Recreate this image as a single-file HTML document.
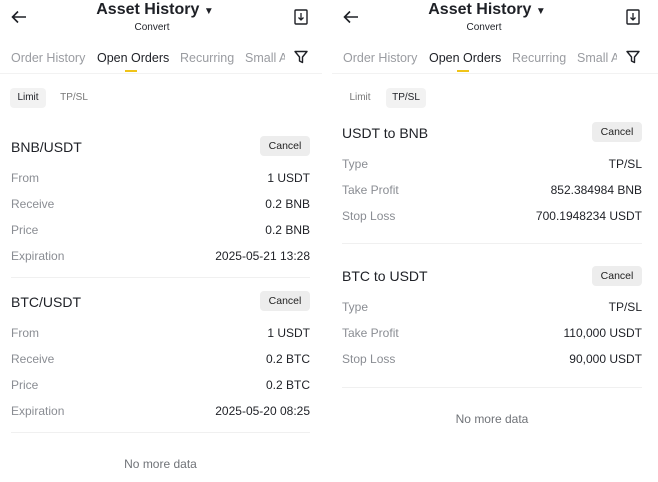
<!DOCTYPE html>
<html><head><style>
*{margin:0;padding:0;box-sizing:border-box}
body{width:658px;height:482px;background:#fff;position:relative;overflow:hidden;font-family:"Liberation Sans",sans-serif;color:#1e2026}
.a{position:absolute;height:16px;line-height:16px;white-space:nowrap}
.l{color:#8a8d93;font-size:12px}
.v{font-size:12px;text-align:right}
.h{font-size:14px;color:#1e2026}
.btn{position:absolute;width:50px;height:20px;background:#ededed;border-radius:4px;font-size:10.5px;line-height:20px;text-align:center;color:#222}
.div{position:absolute;height:1px;background:#f0f0f0}
.tab{font-size:12.5px;color:#9a9ca1}
.title{font-size:16px;font-weight:bold;text-align:center}
.chip{position:absolute;height:20px;line-height:20px;font-size:10px;text-align:center;border-radius:4px}
</style></head><body>

<!-- LEFT PANEL -->
<svg style="position:absolute;left:11px;top:10px" width="16" height="14" viewBox="0 0 16 14"><path d="M15 7H2M7 1.5L1.5 7L7 12.5" stroke="#1e2026" stroke-width="1.6" fill="none"/></svg>
<div class="a title" style="left:88px;top:1px;width:134px;height:18px;line-height:18px">Asset History <span style="font-size:10px">▼</span></div>
<div class="a" style="left:110px;top:20px;width:84px;text-align:center;font-size:10px">Convert</div>
<svg style="position:absolute;left:294px;top:9px" width="14" height="16" viewBox="0 0 14 16"><rect x="1" y="1" width="12" height="14" rx="1" stroke="#1e2026" stroke-width="1.4" fill="none"/><path d="M7 4v7M4.5 8.5L7 11l2.5-2.5" stroke="#1e2026" stroke-width="1.3" fill="none"/></svg>
<div class="a tab" style="left:11px;top:50px">Order History</div>
<div class="a tab" style="left:97px;top:50px;color:#1e2026">Open Orders</div>
<div class="a tab" style="left:180px;top:50px">Recurring</div>
<div class="a tab" style="left:245px;top:50px;width:40px;overflow:hidden">Small Assets</div>
<svg style="position:absolute;left:294px;top:50px" width="14" height="14" viewBox="0 0 14 14"><path d="M1 1.5h12L8.5 7v5.5L5.5 11V7z" stroke="#1e2026" stroke-width="1.4" fill="none" stroke-linejoin="round"/></svg>
<div style="position:absolute;left:125px;top:70px;width:12px;height:2px;background:#f0c419"></div>
<div class="div" style="left:0;top:73px;width:322px;background:#f2f2f2"></div>
<div class="chip" style="left:10px;top:88px;width:36px;background:#f2f2f2;color:#1e2026">Limit</div>
<div class="chip" style="left:54px;top:88px;width:40px;color:#777">TP/SL</div>

<div class="a h" style="left:11px;top:139px">BNB/USDT</div>
<div class="btn" style="left:260px;top:136px">Cancel</div>
<div class="a l" style="left:11px;top:170px">From</div><div class="a v" style="right:348px;top:170px">1 USDT</div>
<div class="a l" style="left:11px;top:196px">Receive</div><div class="a v" style="right:348px;top:196px">0.2 BNB</div>
<div class="a l" style="left:11px;top:222px">Price</div><div class="a v" style="right:348px;top:222px">0.2 BNB</div>
<div class="a l" style="left:11px;top:248px">Expiration</div><div class="a v" style="right:348px;top:248px">2025-05-21 13:28</div>
<div class="div" style="left:11px;top:277px;width:299px"></div>

<div class="a h" style="left:11px;top:294px">BTC/USDT</div>
<div class="btn" style="left:260px;top:291px">Cancel</div>
<div class="a l" style="left:11px;top:325px">From</div><div class="a v" style="right:348px;top:325px">1 USDT</div>
<div class="a l" style="left:11px;top:351px">Receive</div><div class="a v" style="right:348px;top:351px">0.2 BTC</div>
<div class="a l" style="left:11px;top:377px">Price</div><div class="a v" style="right:348px;top:377px">0.2 BTC</div>
<div class="a l" style="left:11px;top:403px">Expiration</div><div class="a v" style="right:348px;top:403px">2025-05-20 08:25</div>
<div class="div" style="left:11px;top:432px;width:299px"></div>
<div class="a l" style="left:11px;width:299px;text-align:center;top:456px;color:#707378">No more data</div>

<!-- RIGHT PANEL -->
<svg style="position:absolute;left:343px;top:10px" width="16" height="14" viewBox="0 0 16 14"><path d="M15 7H2M7 1.5L1.5 7L7 12.5" stroke="#1e2026" stroke-width="1.6" fill="none"/></svg>
<div class="a title" style="left:420px;top:1px;width:134px;height:18px;line-height:18px">Asset History <span style="font-size:10px">▼</span></div>
<div class="a" style="left:442px;top:20px;width:84px;text-align:center;font-size:10px">Convert</div>
<svg style="position:absolute;left:626px;top:9px" width="14" height="16" viewBox="0 0 14 16"><rect x="1" y="1" width="12" height="14" rx="1" stroke="#1e2026" stroke-width="1.4" fill="none"/><path d="M7 4v7M4.5 8.5L7 11l2.5-2.5" stroke="#1e2026" stroke-width="1.3" fill="none"/></svg>
<div class="a tab" style="left:343px;top:50px">Order History</div>
<div class="a tab" style="left:429px;top:50px;color:#1e2026">Open Orders</div>
<div class="a tab" style="left:512px;top:50px">Recurring</div>
<div class="a tab" style="left:577px;top:50px;width:40px;overflow:hidden">Small Assets</div>
<svg style="position:absolute;left:626px;top:50px" width="14" height="14" viewBox="0 0 14 14"><path d="M1 1.5h12L8.5 7v5.5L5.5 11V7z" stroke="#1e2026" stroke-width="1.4" fill="none" stroke-linejoin="round"/></svg>
<div style="position:absolute;left:457px;top:70px;width:12px;height:2px;background:#f0c419"></div>
<div class="div" style="left:332px;top:73px;width:326px;background:#f2f2f2"></div>
<div class="chip" style="left:342px;top:88px;width:36px;color:#777">Limit</div>
<div class="chip" style="left:386px;top:88px;width:40px;background:#f2f2f2;color:#1e2026">TP/SL</div>

<div class="a h" style="left:342px;top:125px">USDT to BNB</div>
<div class="btn" style="left:592px;top:122px">Cancel</div>
<div class="a l" style="left:342px;top:156px">Type</div><div class="a v" style="right:16px;top:156px">TP/SL</div>
<div class="a l" style="left:342px;top:182px">Take Profit</div><div class="a v" style="right:16px;top:182px">852.384984 BNB</div>
<div class="a l" style="left:342px;top:208px">Stop Loss</div><div class="a v" style="right:16px;top:208px">700.1948234 USDT</div>
<div class="div" style="left:342px;top:243px;width:300px"></div>

<div class="a h" style="left:342px;top:268px">BTC to USDT</div>
<div class="btn" style="left:592px;top:266px">Cancel</div>
<div class="a l" style="left:342px;top:299px">Type</div><div class="a v" style="right:16px;top:299px">TP/SL</div>
<div class="a l" style="left:342px;top:325px">Take Profit</div><div class="a v" style="right:16px;top:325px">110,000 USDT</div>
<div class="a l" style="left:342px;top:351px">Stop Loss</div><div class="a v" style="right:16px;top:351px">90,000 USDT</div>
<div class="div" style="left:342px;top:387px;width:300px"></div>
<div class="a l" style="left:342px;width:300px;text-align:center;top:411px;color:#707378">No more data</div>

</body></html>
